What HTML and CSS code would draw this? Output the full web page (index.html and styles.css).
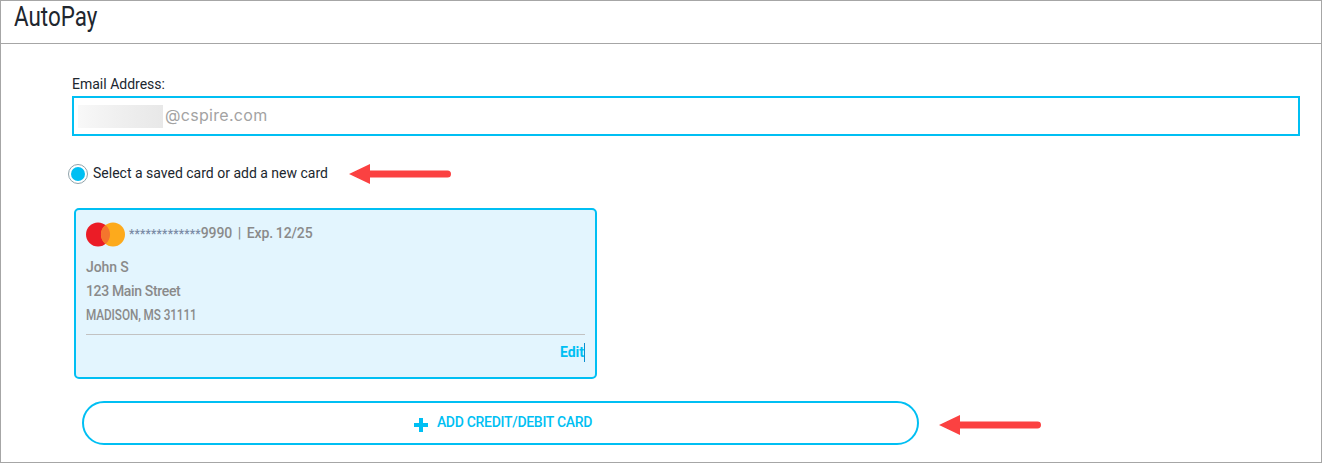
FILE: index.html
```html
<!DOCTYPE html>
<html lang="en">
<head>
  <meta charset="UTF-8">
  <title>AutoPay</title>
  <link rel="stylesheet" href="styles.css">
</head>
<body>
  <div class="panel">
    <div class="panel-head"><span class="panel-title">AutoPay</span></div>
    <div class="panel-body">
      <label class="email-label" for="email">Email Address:</label>
      <div class="email-box" id="email">
        <span class="blurred"></span>
        <span class="email-domain">@cspire.com</span>
      </div>

      <div class="radio-row">
        <span class="radio"><span class="radio-dot"></span></span>
        <span class="radio-text">Select a saved card or add a new card</span>
        <svg class="arrow arrow-one" width="102" height="24" viewBox="0 0 102 24">
          <path d="M0 12 L21 2 L21 8.500 L98.500 8.500 A3.500 3.500 0 0 1 98.500 15.500 L21 15.500 L21 22 Z" fill="#fb4141"/>
        </svg>
      </div>

      <div class="card">
        <div class="card-top">
          <svg class="mc-logo" width="39" height="25" viewBox="0 0 39 25">
            <circle cx="12" cy="12.500" r="12" fill="#eb1c26"/>
            <circle cx="27" cy="12.500" r="12" fill="#fdaa1c"/>
            <path d="M19.500 3.100 A12 12 0 0 1 19.500 21.900 A12 12 0 0 1 19.500 3.100 Z" fill="#f4752d"/>
          </svg>
          <span class="card-num"><span class="stars">*************</span>9990&nbsp; |&nbsp; Exp. 12/25</span>
        </div>
        <div class="card-line">John S</div>
        <div class="card-line card-street">123 Main Street</div>
        <div class="card-line"><span class="card-city">MADISON, MS 31111</span></div>
        <div class="card-foot"><span class="edit">Edit</span></div>
      </div>

      <div class="add-row">
        <div class="add-btn">
          <svg class="plus" width="14" height="14" viewBox="0 0 14 14">
            <path d="M5 0 H9 V5 H14 V9 H9 V14 H5 V9 H0 V5 H5 Z" fill="#00bff3"/>
          </svg>
          <span class="add-text">ADD CREDIT/DEBIT CARD</span>
        </div>
        <svg class="arrow arrow-two" width="102" height="24" viewBox="0 0 102 24">
          <path d="M0 12 L21 2 L21 8.500 L98.500 8.500 A3.500 3.500 0 0 1 98.500 15.500 L21 15.500 L21 22 Z" fill="#fb4141"/>
        </svg>
      </div>
    </div>
  </div>
</body>
</html>
```

FILE: styles.css
```css
html, body {
    margin: 0;
    padding: 0;
}
body {
    font-family: "Roboto", "Liberation Sans", sans-serif;
    background-color: #fff;
    color: #20262e;
}
.panel {
    width: 1322px;
    height: 463px;
    box-sizing: border-box;
    border: 1px solid #a6a6a6;
    overflow: hidden;
}
.panel-head {
    height: 43px;
    box-sizing: border-box;
    padding: 0 0 0 13px;
    border-bottom: 1px solid #a6a6a6;
    font-size: 27px;
    line-height: 32px;
}
.panel-title {
    display: inline-block;
    transform: scaleX(0.83);
    transform-origin: left center;
}
.panel-body {
    padding: 32px 21px 0 71px;
}
.email-label {
    display: block;
    font-size: 14px;
    line-height: 17px;
    height: 20px;
}
.email-box {
    height: 40px;
    box-sizing: border-box;
    border: 2px solid #00bff3;
    display: flex;
    align-items: center;
    padding-left: 4px;
}
.blurred {
    width: 85px;
    height: 23px;
    background: linear-gradient(90deg, #f8f8f8, #efefef 50%, #e8e8e8);
}
.email-domain {
    font-family: "Inter", sans-serif;
    font-size: 16px;
    letter-spacing: 0.3px;
    color: #a3a3a3;
    margin-left: 2px;
    margin-bottom: 2px;
}
.radio-row {
    display: flex;
    align-items: center;
    margin-top: 25px;
    margin-left: -4px;
    height: 24px;
}
.radio {
    width: 20px;
    height: 20px;
    box-sizing: border-box;
    border: 1px solid #8fa3ab;
    border-radius: 50%;
    display: flex;
    align-items: center;
    justify-content: center;
    margin-top: 2px;
}
.radio-dot {
    width: 14px;
    height: 14px;
    border-radius: 50%;
    background-color: #00bff3;
}
.radio-text {
    font-size: 14px;
    margin-left: 5px;
}
.arrow {
    flex: none;
}
.arrow-one {
    margin-left: 21px;
    margin-top: 1px;
}
.card {
    width: 523px;
    height: 171px;
    box-sizing: border-box;
    margin: 23px 0 0 2px;
    padding: 12px 10px 0;
    border: 2px solid #00bff3;
    border-radius: 5px;
    background-color: #e3f5fe;
    color: #8a8a8a;
    font-size: 14px;
    font-weight: 500;
}
.card-top {
    display: flex;
    align-items: center;
    height: 25px;
    margin-bottom: 8px;
}
.mc-logo {
    flex: none;
    margin-right: 4px;
}
.card-num {
    margin-bottom: 4px;
    letter-spacing: -0.1px;
    word-spacing: -0.6px;
}
.stars {
    color: #7a8aa5;
    font-size: 12px;
    letter-spacing: 0.2px;
}
.card-line {
    line-height: 24px;
    letter-spacing: -0.1px;
}
.card-street {
    letter-spacing: -0.35px;
}
.card-city {
    display: inline-block;
    transform: scaleX(0.84);
    transform-origin: left center;
}
.card-foot {
    margin-top: 7px;
    border-top: 1px solid #c2c2c2;
    display: flex;
    justify-content: flex-end;
    padding-top: 8px;
}
.edit {
    color: #00bff3;
    font-weight: 700;
    line-height: 19px;
    border-right: 1px solid #0a8fd0;
}
.add-row {
    display: flex;
    align-items: center;
    margin: 22px 0 0 10px;
}
.add-btn {
    width: 837px;
    height: 44px;
    box-sizing: border-box;
    border: 2px solid #00bff3;
    border-radius: 22px;
    display: flex;
    align-items: center;
    justify-content: center;
    gap: 9px;
    padding-left: 5px;
    color: #00bff3;
    font-size: 14px;
    font-weight: 500;
}
.add-text {
    letter-spacing: -0.3px;
    margin-bottom: 2px;
}
.plus {
    margin-top: 4px;
}
.arrow-two {
    margin-left: 20px;
    margin-top: 4px;
}
```
